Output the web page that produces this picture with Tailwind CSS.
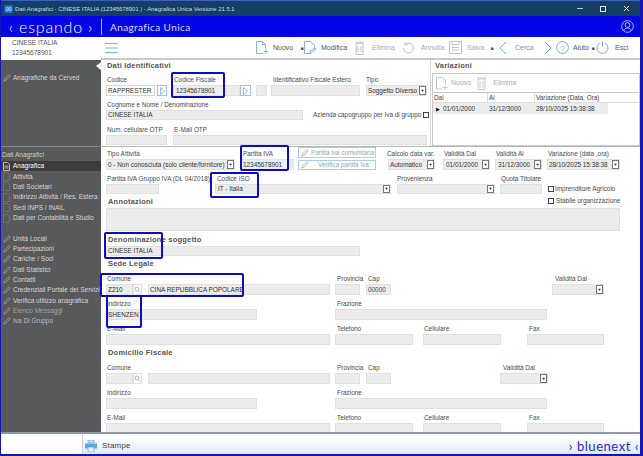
<!DOCTYPE html>
<html lang="it">
<head>
<meta charset="utf-8"/>
<title>Anagrafica Unica</title>
<script src="https://cdn.jsdelivr.net/npm/@tailwindcss/browser@4"></script>
</head>
<body class="bg-white">
<div class="relative w-[643px] h-[456px] overflow-hidden flex flex-col bg-white border-l border-r-[3px] border-b-2 border-[#1616b4] font-['Liberation_Sans',sans-serif] text-[6.4px] leading-[10px] text-[#4a4a4a]">

  <!-- Title bar -->
  <div class="h-[16px] shrink-0 bg-[#123f63] border-t border-[#3f5fc0] flex items-center text-[#cfdbe6] text-[5.9px]">
    <div class="ml-[3px] w-[9px] h-[8px] bg-[#1c6fc9] rounded-[2px] text-[5px] leading-[8px] text-center text-white">00</div>
    <span class="ml-[2px]">Dati Anagrafici - CINESE ITALIA (12345678901 ) - Anagrafica Unica Versione 21.5.1</span>
    <div class="ml-auto mr-[10px] flex items-center gap-[17px]">
      <div class="w-[6px] h-px bg-[#b8c8d6]"></div>
      <div class="w-[6px] h-[6px] border border-[#dfe8ef]"></div>
      <svg width="7" height="7" viewBox="0 0 7 7" stroke="#e8eef3" fill="none"><path d="M1 1l5 5M6 1L1 6"/></svg>
    </div>
  </div>

  <!-- Blue header -->
  <div class="h-[21px] shrink-0 bg-[#0505e6] flex items-center text-white">
    <div class="w-[100px] flex items-center justify-center font-['Lato',sans-serif] font-light text-[16px] leading-[20px] tracking-[0.8px]">‹ espando ›</div>
    <div class="w-px h-[16px] bg-[#aab0f0]"></div>
    <span class="ml-[8px] font-['Lato',sans-serif] text-[10px] tracking-[0.4px] text-[#d9dcff]">Anagrafica Unica</span>
    <svg class="ml-auto mr-[6px]" width="13" height="13" viewBox="0 0 13 13" fill="none" stroke="#c4cbff" stroke-width="0.9"><circle cx="6.5" cy="6.5" r="5.8"/><circle cx="6.5" cy="5" r="2.4"/><path d="M2.6 11c.6-2.2 2.2-3 3.9-3s3.3.8 3.9 3"/></svg>
  </div>

  <!-- Body -->
  <div class="flex h-[395px] shrink-0 overflow-hidden">

    <!-- Sidebar -->
    <aside class="w-[100px] shrink-0 flex flex-col text-[6.5px]">
      <div class="h-[23px] shrink-0 bg-white pl-[11px] pt-px text-[#555]">
        <div>CINESE ITALIA</div>
        <div>12345678901</div>
      </div>
      <div class="relative flex-1 bg-[#58595b] text-[#d6d6d6]">
        <div class="absolute right-0 top-[2px] w-0 h-0 border-y-[4px] border-y-transparent border-r-[5px] border-r-white"></div>
        <div class="h-[87px] pt-[13px] border-b border-[#8a8b8d]">
          <div class="h-[10px] flex items-center">
            <svg class="ml-[2px] w-[8px] h-[8px]" viewBox="0 0 8 8" fill="none" stroke="#a9a9a9" stroke-width="0.8"><path d="M.8 7.2l1-2.5L6 .7l1.2 1.2-4 4.2z"/></svg>
            <span class="ml-[2px]">Anagrafiche da Cerved</span>
          </div>
        </div>
        <div class="pt-[2px] text-[#d4d4a8] pl-px h-[13px] mt-px">Dati Anagrafici</div>
        <div class="flex flex-col text-[#d6d6d6]">
          <div class="h-[10.4px] flex items-center bg-[#3c3c3d] text-white"><svg class="ml-[2px] w-[7px] h-[9px]" viewBox="0 0 7 9" fill="none" stroke="#ddd" stroke-width="0.8"><path d="M.5.5h4l2 2v6h-6zM1.5 4h4M1.5 6h4"/></svg><span class="ml-[3px]">Anagrafica</span></div>
          <div class="h-[10.4px] flex items-center"><svg class="ml-[2px] w-[7px] h-[9px]" viewBox="0 0 7 9" fill="none" stroke="#777" stroke-width="0.8"><path d="M.5.5h4l2 2v6h-6z"/></svg><span class="ml-[3px]">Attività</span></div>
          <div class="h-[10.4px] flex items-center"><svg class="ml-[2px] w-[7px] h-[9px]" viewBox="0 0 7 9" fill="none" stroke="#777" stroke-width="0.8"><path d="M.5.5h4l2 2v6h-6z"/></svg><span class="ml-[3px]">Dati Societari</span></div>
          <div class="h-[10.4px] flex items-center"><svg class="ml-[2px] w-[7px] h-[9px]" viewBox="0 0 7 9" fill="none" stroke="#777" stroke-width="0.8"><path d="M.5.5h4l2 2v6h-6z"/></svg><span class="ml-[3px] whitespace-nowrap">Indirizzo Attività / Res. Estera</span></div>
          <div class="h-[10.4px] flex items-center"><svg class="ml-[2px] w-[7px] h-[9px]" viewBox="0 0 7 9" fill="none" stroke="#777" stroke-width="0.8"><path d="M.5.5h4l2 2v6h-6z"/></svg><span class="ml-[3px]">Sedi INPS / INAIL</span></div>
          <div class="h-[10.4px] flex items-center"><svg class="ml-[2px] w-[7px] h-[9px]" viewBox="0 0 7 9" fill="none" stroke="#777" stroke-width="0.8"><path d="M.5.5h4l2 2v6h-6z"/></svg><span class="ml-[3px] whitespace-nowrap">Dati per Contabilità e Studio</span></div>
        </div>
        <div class="mt-[10px] flex flex-col">
          <div class="h-[10.35px] flex items-center"><svg class="ml-[2px] w-[8px] h-[8px]" viewBox="0 0 8 8" fill="none" stroke="#a0a0a0" stroke-width="0.8"><path d="M.8 7.2l1-2.5L6 .7l1.2 1.2-4 4.2z"/></svg><span class="ml-[2px]">Unità Locali</span></div>
          <div class="h-[10.35px] flex items-center"><svg class="ml-[2px] w-[8px] h-[8px]" viewBox="0 0 8 8" fill="none" stroke="#a0a0a0" stroke-width="0.8"><path d="M.8 7.2l1-2.5L6 .7l1.2 1.2-4 4.2z"/></svg><span class="ml-[2px]">Partecipazioni</span></div>
          <div class="h-[10.35px] flex items-center"><svg class="ml-[2px] w-[8px] h-[8px]" viewBox="0 0 8 8" fill="none" stroke="#a0a0a0" stroke-width="0.8"><path d="M.8 7.2l1-2.5L6 .7l1.2 1.2-4 4.2z"/></svg><span class="ml-[2px]">Cariche / Soci</span></div>
          <div class="h-[10.35px] flex items-center"><svg class="ml-[2px] w-[8px] h-[8px]" viewBox="0 0 8 8" fill="none" stroke="#a0a0a0" stroke-width="0.8"><path d="M.8 7.2l1-2.5L6 .7l1.2 1.2-4 4.2z"/></svg><span class="ml-[2px]">Dati Statistici</span></div>
          <div class="h-[10.35px] flex items-center"><svg class="ml-[2px] w-[8px] h-[8px]" viewBox="0 0 8 8" fill="none" stroke="#a0a0a0" stroke-width="0.8"><path d="M.8 7.2l1-2.5L6 .7l1.2 1.2-4 4.2z"/></svg><span class="ml-[2px]">Contatti</span></div>
          <div class="h-[10.35px] flex items-center"><svg class="ml-[2px] w-[8px] h-[8px]" viewBox="0 0 8 8" fill="none" stroke="#a0a0a0" stroke-width="0.8"><path d="M.8 7.2l1-2.5L6 .7l1.2 1.2-4 4.2z"/></svg><span class="ml-[2px] whitespace-nowrap">Credenziali Portale dei Servizi</span></div>
          <div class="h-[10.35px] flex items-center"><svg class="ml-[2px] w-[8px] h-[8px]" viewBox="0 0 8 8" fill="none" stroke="#a0a0a0" stroke-width="0.8"><path d="M.8 7.2l1-2.5L6 .7l1.2 1.2-4 4.2z"/></svg><span class="ml-[2px] whitespace-nowrap">Verifica utilizzo anagrafica</span></div>
          <div class="h-[10.35px] flex items-center text-[#a2a2a2]"><svg class="ml-[2px] w-[8px] h-[8px]" viewBox="0 0 8 8" fill="none" stroke="#a0a0a0" stroke-width="0.8"><path d="M.8 7.2l1-2.5L6 .7l1.2 1.2-4 4.2z"/></svg><span class="ml-[2px]">Elenco Messaggi</span></div>
          <div class="h-[10.35px] flex items-center text-[#bcbcbc]"><svg class="ml-[2px] w-[8px] h-[8px]" viewBox="0 0 8 8" fill="none" stroke="#a0a0a0" stroke-width="0.8"><path d="M.8 7.2l1-2.5L6 .7l1.2 1.2-4 4.2z"/></svg><span class="ml-[2px]">Iva Di Gruppo</span></div>
        </div>
      </div>
    </aside>

    <!-- Main -->
    <main class="flex-1 min-w-0 flex flex-col">
      <!-- Toolbar -->
      <div class="h-[23px] shrink-0 border-b-2 border-[#c8c8c8] flex items-center text-[#555] bg-white text-[7px]">
        <svg class="ml-[4px]" width="13" height="10" viewBox="0 0 13 10" fill="none" stroke="#74b6dc"><path d="M0 .5h13M0 5h13M0 9.5h13"/></svg>
        <svg class="ml-[137px]" width="15" height="15" viewBox="0 0 15 15" fill="none" stroke="#6fb0da" stroke-width="0.9"><path d="M8 13.5H1.5V1.5h6l3 3v4M7.5 1.5v3h3M11 9v5M8.5 11.5h5"/></svg>
        <span class="ml-[3px] w-[27px]">Nuovo</span>
        <span class="w-[4px] text-center text-[5px]">■</span>
        <svg class="ml-[-1px]" width="15" height="15" viewBox="0 0 15 15" fill="none" stroke="#6fb0da" stroke-width="0.9"><path d="M8 13.5H1.5V1.5h6l4 4v3M7 11l5-3 1 1-5 4z"/></svg>
        <span class="ml-[3px] w-[34px]">Modifica</span>
        <svg width="9" height="14" viewBox="0 0 9 14" fill="none" stroke="#bbb" stroke-width="0.9"><path d="M1 2.5h7v11H1zM0 1h9M3 5v6M6 5v6"/></svg>
        <span class="ml-[8px] w-[30px] text-[#aaa]">Elimina</span>
        <svg width="12" height="13" viewBox="0 0 12 13" fill="none" stroke="#bbb" stroke-width="0.9"><path d="M3 3.5a5 5 0 1 1-1.500 3.500M3 1v3h3"/></svg>
        <span class="ml-[7px] w-[28px] text-[#aaa]">Annulla</span>
        <svg width="13" height="13" viewBox="0 0 13 13" fill="none" stroke="#bbb" stroke-width="0.9"><path d="M.5.5h12v12H.5zM3 .5v3h7v-3M3 6.500h7M3 9h7"/></svg>
        <span class="ml-[5px] w-[23px] text-[#aaa]">Salva</span>
        <span class="w-[4px] text-center text-[5px]">■</span>
        <svg class="ml-[5px]" width="8" height="14" viewBox="0 0 8 14" fill="none" stroke="#6fb0da"><path d="M7 1L1 7l6 6"/></svg>
        <span class="ml-[8px] w-[29px] text-[#6f93a8]">Cerca</span>
        <svg width="8" height="14" viewBox="0 0 8 14" fill="none" stroke="#6fb0da"><path d="M1 1l6 6-6 6"/></svg>
        <svg class="ml-[4px]" width="13" height="13" viewBox="0 0 13 13" fill="none" stroke="#6fb0da"><circle cx="6.500" cy="6.500" r="5.900"/><text x="6.500" y="9.500" text-anchor="middle" font-size="8" fill="#6fb0da" stroke="none" font-family="Liberation Sans">?</text></svg>
        <span class="ml-[4px] w-[18px]">Aiuto</span>
        <span class="w-[4px] text-center text-[5px]">■</span>
        <svg class="ml-[1px]" width="13" height="13" viewBox="0 0 13 13" fill="none" stroke="#6fb0da"><path d="M4 2a5.500 5.500 0 1 0 5 0M6.500 .5v5"/></svg>
        <span class="ml-[6px]">Esci</span>
      </div>

      <!-- Upper panels -->
      <div class="h-[87px] shrink-0 flex border-b border-[#b5b5b5]">
        <section class="w-[330px] shrink-0 pl-[5px] border-r border-[#d8d8d8]">
          <div class="h-[12px] pl-px font-bold text-[7.5px] leading-[12px] tracking-[0.2px] text-[#555]">Dati Identificativi</div>
          <div class="h-[11px] mt-[2px] flex items-center pl-px">
            <span class="w-[67px]">Codice</span><span class="w-[99px]">Codice Fiscale</span><span class="w-[93px]">Identificativo Fiscale Estero</span><span>Tipo</span>
          </div>
          <div class="h-[11px] flex">
            <div class="w-[49px] bg-white border border-[#d5d5d5] pl-px text-[#333] whitespace-nowrap overflow-hidden leading-[9px]">RAPPRESTER</div>
            <div class="ml-[2px] w-[10px] border border-[#9cc7e4] flex items-center justify-center"><svg width="5" height="8" viewBox="0 0 5 8" fill="none" stroke="#6fb0da" stroke-width="0.8"><path d="M.5.5L4.500 4 .5 7.500z"/></svg></div>
            <div class="ml-[6px] w-[67px] bg-[#ececec] border border-[#e0e0e0] pl-[2px] text-[#333] leading-[9px]">12345678901</div>
            <div class="w-[11px] border border-[#9cc7e4] flex items-center justify-center"><svg width="5" height="8" viewBox="0 0 5 8" fill="none" stroke="#6fb0da" stroke-width="0.8"><path d="M.5.5L4.500 4 .5 7.500z"/></svg></div>
            <div class="ml-[5px] w-[11px] bg-[#ececec] border border-[#e0e0e0]"></div>
            <div class="ml-[4px] w-[89px] bg-[#ececec] border border-[#e0e0e0]"></div>
            <div class="ml-[6px] w-[61px] bg-[#ececec] border border-[#e0e0e0] flex items-center pl-px text-[#333] whitespace-nowrap overflow-hidden"><span class="flex-1">Soggetto Diverso</span><span class="w-[7px] h-full bg-white border border-[#777] text-[#111] text-[4px] leading-[7px] text-center">▼</span></div>
          </div>
          <div class="h-[14px] flex items-end pl-px">Cognome e Nome / Denominazione</div>
          <div class="h-[10px] flex items-stretch">
            <div class="w-[197px] bg-[#ececec] border border-[#e0e0e0] pl-px text-[#333] leading-[8px]">CINESE ITALIA</div>
            <div class="ml-[10px] flex items-center whitespace-nowrap"><span>Azienda capogruppo per Iva di gruppo</span><span class="ml-[2px] w-[6px] h-[6px] border border-[#444] bg-white"></span></div>
          </div>
          <div class="h-[15px] flex items-end pl-px"><span class="w-[67px]">Num. cellulare OTP</span><span>E-Mail OTP</span></div>
          <div class="h-[10px] flex">
            <div class="w-[61px] bg-[#ececec] border border-[#e0e0e0]"></div>
            <div class="ml-[6px] w-[254px] bg-[#ececec] border border-[#e0e0e0]"></div>
          </div>
        </section>
        <section class="flex-1 min-w-0 pl-px flex flex-col">
          <div class="h-[12px] pl-[3px] font-bold text-[7.5px] leading-[12px] tracking-[0.2px] text-[#555]">Variazioni</div>
          <div class="flex-1 mt-px border border-[#c8c8c8] flex flex-col">
            <div class="h-[19px] shrink-0 flex items-center border-b border-[#c8c8c8] text-[#aaa] text-[7px]">
              <svg class="ml-[3px]" width="12" height="13" viewBox="0 0 12 13" fill="none" stroke="#bbb" stroke-width="0.8"><path d="M6 12H.5V.5h6l3 3v4M9 8v5M6.500 10.500h5"/></svg>
              <span class="ml-[3px]">Nuovo</span>
              <svg class="ml-[6px]" width="9" height="13" viewBox="0 0 9 13" fill="none" stroke="#bbb" stroke-width="0.8"><path d="M1 2h7v10.500H1zM0 1h9M3 4v7M6 4v7"/></svg>
              <span class="ml-[7px]">Elimina</span>
            </div>
            <div class="h-[10px] shrink-0 flex border-b border-[#ddd] text-[#444] leading-[9px]">
              <span class="w-[55px] border-r border-[#ddd] pl-px">Dal</span><span class="w-[47px] border-r border-[#ddd] pl-px">Al</span><span class="w-[73px] pl-px whitespace-nowrap">Variazione (Data, Ora)</span>
            </div>
            <div class="h-[11px] shrink-0 flex items-center text-[#333]">
              <div class="w-[175px] h-full bg-[#ececec] flex items-center">
                <span class="w-[9px] text-center text-[5px] text-black">▶</span>
                <span class="w-[46px] pl-[1px]">01/01/2000</span><span class="w-[47px] pl-[1px]">31/12/3000</span><span class="pl-[1px] whitespace-nowrap">28/10/2025 15:38:38</span>
              </div>
            </div>
          </div>
        </section>
      </div>

      <!-- Lower form -->
      <section class="flex-1 min-h-0 pl-[5px] overflow-hidden">
        <div class="h-[12px] pt-[2px] flex items-center pl-px whitespace-nowrap">
          <span class="w-[132px]">Tipo Attività</span><span class="w-[148px] pl-[4px]">Partita IVA</span><span class="w-[57px]">Calcolo data var.</span><span class="w-[52px]">Validità Dal</span><span class="w-[52px]">Validità Al</span><span>Variazione (data ,ora)</span>
        </div>
        <div class="h-[11px] flex relative">
          <div class="w-[129px] bg-[#ececec] border border-[#e0e0e0] flex items-center pl-px whitespace-nowrap text-[#333] overflow-hidden"><span class="flex-1 overflow-hidden">0 - Non conosciuta (solo cliente/fornitore)</span><span class="w-[7px] h-full bg-white border border-[#777] text-[#111] text-[4px] leading-[7px] text-center shrink-0">▼</span></div>
          <div class="ml-[5px] w-[54px] bg-[#e6eef8] border border-[#e0e6f0] pl-[2px] text-[#333] leading-[9px]">12345678901</div>
          <div class="ml-[4px] w-[78px] mt-px border border-[#a9d0e8] flex items-center whitespace-nowrap text-[#8aa9ba]"><svg class="ml-[2px] w-[8px] h-[8px]" viewBox="0 0 8 8" fill="none" stroke="#a5a5a5" stroke-width="0.8"><path d="M.8 7.200l1-2.500L6 .7l1.200 1.200-4 4.200z"/></svg><span class="ml-[9px]">Verifica partita Iva</span></div>
          <div class="ml-[12px] w-[47px] bg-[#ececec] border border-[#e0e0e0] flex items-center pl-px text-[#333] overflow-hidden"><span class="flex-1">Automatico</span><span class="w-[7px] h-full bg-white border border-[#777] text-[#111] text-[4px] leading-[7px] text-center">▼</span></div>
          <div class="ml-[8px] w-[47px] bg-[#ececec] border border-[#e0e0e0] flex items-center pl-[2px] text-[#333] overflow-hidden"><span class="flex-1">01/01/2000</span><span class="w-[7px] h-full bg-white border border-[#777] text-[#111] text-[4px] leading-[7px] text-center">▼</span></div>
          <div class="ml-[5px] w-[47px] bg-[#ececec] border border-[#e0e0e0] flex items-center pl-[2px] text-[#333] overflow-hidden"><span class="flex-1">31/12/3000</span><span class="w-[7px] h-full bg-white border border-[#777] text-[#111] text-[4px] leading-[7px] text-center">▼</span></div>
          <div class="ml-[5px] w-[73px] bg-[#ececec] border border-[#e0e0e0] flex items-center pl-px text-[#333] whitespace-nowrap overflow-hidden"><span class="flex-1">28/10/2025 15:38:38</span><span class="w-[7px] h-full bg-white border border-[#777] text-[#111] text-[4px] leading-[7px] text-center shrink-0">▼</span></div>
          <div class="absolute left-[192px] top-[-12px] w-[78px] h-[11px] border border-[#a9d0e8] flex items-center whitespace-nowrap text-[#8aa9ba]"><svg class="ml-[2px] w-[8px] h-[8px]" viewBox="0 0 8 8" fill="none" stroke="#a5a5a5" stroke-width="0.8"><path d="M.8 7.200l1-2.500L6 .7l1.200 1.200-4 4.200z"/></svg><span class="ml-[2px]">Partita iva comunitaria</span></div>
        </div>
        <div class="h-[14px] flex items-end pl-px whitespace-nowrap">
          <span class="w-[110px]">Partita IVA Gruppo IVA (DL 04/2018)</span><span class="w-[180px]">Codice ISO</span><span class="w-[104px]">Provenienza</span><span>Quota Titolare</span>
        </div>
        <div class="h-[10px] flex">
          <div class="w-[53px] bg-[#ececec] border border-[#e0e0e0]"></div>
          <div class="ml-[56px] w-[176px] bg-[#ececec] border border-[#e0e0e0] flex items-center pl-[2px] text-[#333]"><span class="flex-1">IT - Italia</span><span class="w-[7px] h-full bg-white border border-[#777] text-[#111] text-[4px] leading-[6px] text-center">▼</span></div>
          <div class="ml-[6px] w-[98px] bg-[#ececec] border border-[#e0e0e0] flex items-center"><span class="flex-1"></span><span class="w-[7px] h-full bg-white border border-[#777] text-[#111] text-[4px] leading-[6px] text-center">▼</span></div>
          <div class="ml-[5px] w-[42px] bg-[#ececec] border border-[#e0e0e0]"></div>
          <div class="ml-[6px] flex items-center whitespace-nowrap"><span class="w-[6px] h-[6px] border border-[#444] bg-white"></span><span class="ml-[1px]">Imprenditore Agricolo</span></div>
        </div>
        <div class="h-[14px] flex items-end pl-[2px] relative">
          <span class="font-bold text-[7.5px] leading-[12px] tracking-[0.2px] text-[#555]">Annotazioni</span>
          <div class="absolute left-[442px] top-[2px] flex items-center whitespace-nowrap"><span class="w-[6px] h-[6px] border border-[#444] bg-white"></span><span class="ml-[2px]">Stabile organizzazione</span></div>
        </div>
        <div class="w-[514px] h-[23px] bg-[#ececec] border border-[#e0e0e0]"></div>
        <div class="h-[15px] flex items-end pl-[2px]"><span class="font-bold text-[7.5px] leading-[12px] tracking-[0.2px] text-[#555]">Denominazione soggetto</span></div>
        <div class="w-[254px] h-[10px] bg-[#ececec] border border-[#e0e0e0] pl-px text-[#333] leading-[8px]">CINESE ITALIA</div>
        <div class="h-[14px] flex items-end pl-[2px]"><span class="font-bold text-[7.5px] leading-[12px] tracking-[0.2px] text-[#555]">Sede Legale</span></div>
        <div class="h-[14px] flex items-end pl-px whitespace-nowrap">
          <span class="w-[230px]">Comune</span><span class="w-[31px]">Provincia</span><span class="w-[187px]">Cap</span><span>Validità Dal</span>
        </div>
        <div class="h-[11px] flex">
          <div class="w-[27px] bg-[#ececec] border border-[#e0e0e0] pl-px text-[#222] leading-[9px]">Z210</div>
          <div class="w-[9px] border border-[#e0e0e0] flex items-center justify-center"><svg width="7" height="7" viewBox="0 0 7 7" fill="none" stroke="#8aa" stroke-width="0.8"><circle cx="3" cy="3" r="2"/><path d="M4.500 4.500L6.500 6.500"/></svg></div>
          <div class="ml-[6px] w-[182px] bg-[#ececec] border border-[#e0e0e0] pl-px text-[#333] whitespace-nowrap overflow-hidden leading-[9px]">CINA REPUBBLICA POPOLARE</div>
          <div class="ml-[5px] w-[25px] bg-[#ececec] border border-[#e0e0e0]"></div>
          <div class="ml-[6px] w-[25px] bg-[#ececec] border border-[#e0e0e0] pl-px text-[#444] leading-[9px]">00000</div>
          <div class="ml-[161px] w-[52px] bg-[#ececec] border border-[#e0e0e0] flex"><span class="flex-1"></span><span class="w-[7px] h-full bg-white border border-[#777] text-[#111] text-[4px] leading-[7px] text-center">▼</span></div>
        </div>
        <div class="h-[14px] flex items-end pl-px"><span class="w-[230px]">Indirizzo</span><span>Frazione</span></div>
        <div class="h-[11px] flex">
          <div class="w-[151px] bg-[#ececec] border border-[#e0e0e0] pl-px text-[#333] leading-[9px]">SHENZEN</div>
          <div class="ml-[78px] w-[212px] bg-[#ececec] border border-[#e0e0e0]"></div>
        </div>
        <div class="h-[14px] flex items-end pl-px"><span class="w-[230px]">E-Mail</span><span class="w-[87px]">Telefono</span><span class="w-[105px]">Cellulare</span><span>Fax</span></div>
        <div class="h-[11px] flex">
          <div class="w-[224px] bg-[#ececec] border border-[#e0e0e0]"></div>
          <div class="ml-[5px] w-[78px] bg-[#ececec] border border-[#e0e0e0]"></div>
          <div class="ml-[10px] w-[78px] bg-[#ececec] border border-[#e0e0e0]"></div>
          <div class="ml-[26px] w-[77px] bg-[#ececec] border border-[#e0e0e0]"></div>
        </div>
        <div class="h-[14px] flex items-end pl-[2px]"><span class="font-bold text-[7.5px] leading-[12px] tracking-[0.2px] text-[#555]">Domicilio Fiscale</span></div>
        <div class="h-[14px] flex items-end pl-px whitespace-nowrap">
          <span class="w-[230px]">Comune</span><span class="w-[31px]">Provincia</span><span class="w-[135px]">Cap</span><span>Validità Dal</span>
        </div>
        <div class="h-[11px] flex">
          <div class="w-[27px] bg-[#ececec] border border-[#e0e0e0]"></div>
          <div class="w-[9px] border border-[#e0e0e0] flex items-center justify-center"><svg width="7" height="7" viewBox="0 0 7 7" fill="none" stroke="#8aa" stroke-width="0.8"><circle cx="3" cy="3" r="2"/><path d="M4.500 4.500L6.500 6.500"/></svg></div>
          <div class="ml-[6px] w-[182px] bg-[#ececec] border border-[#e0e0e0]"></div>
          <div class="ml-[5px] w-[25px] bg-[#ececec] border border-[#e0e0e0]"></div>
          <div class="ml-[6px] w-[25px] bg-[#ececec] border border-[#e0e0e0]"></div>
          <div class="ml-[109px] w-[48px] bg-[#ececec] border border-[#e0e0e0] flex"><span class="flex-1"></span><span class="w-[7px] h-full bg-white border border-[#777] text-[#111] text-[4px] leading-[7px] text-center">▼</span></div>
        </div>
        <div class="h-[14px] flex items-end pl-px"><span class="w-[230px]">Indirizzo</span><span>Frazione</span></div>
        <div class="h-[11px] flex">
          <div class="w-[151px] bg-[#ececec] border border-[#e0e0e0]"></div>
          <div class="ml-[78px] w-[212px] bg-[#ececec] border border-[#e0e0e0]"></div>
        </div>
        <div class="h-[14px] flex items-end pl-px"><span class="w-[230px]">E-Mail</span><span class="w-[87px]">Telefono</span><span class="w-[105px]">Cellulare</span><span>Fax</span></div>
        <div class="h-[11px] flex">
          <div class="w-[224px] bg-[#ececec] border border-[#e0e0e0]"></div>
          <div class="ml-[5px] w-[78px] bg-[#ececec] border border-[#e0e0e0]"></div>
          <div class="ml-[10px] w-[78px] bg-[#ececec] border border-[#e0e0e0]"></div>
          <div class="ml-[26px] w-[77px] bg-[#ececec] border border-[#e0e0e0]"></div>
        </div>
      </section>
    </main>
  </div>

  <!-- Footer -->
  <div class="flex-1 border-t-2 border-[#8c9ca6] flex bg-white">
    <div class="w-[82px] border-r border-[#cfcfcf]"></div>
    <div class="flex-1 mt-[3px] bg-gradient-to-b from-white to-[#dceafa] flex items-center">
      <svg class="ml-[2px]" width="12" height="12" viewBox="0 0 12 12"><path d="M3 0h6v3H3z" fill="#bfe0f5" stroke="#4f9fd0" stroke-width="0.6"/><path d="M0 3.500h12v5H0z" fill="#5aa9da"/><path d="M3 7h6v5H3z" fill="#e6f3fb" stroke="#4f9fd0" stroke-width="0.6"/></svg>
      <span class="ml-[5px] text-[8px] tracking-[0.2px] text-[#444]">Stampe</span>
      <span class="ml-auto mr-[1px] font-['Lato',sans-serif] text-[13px] leading-[14px] tracking-[0.55px] text-[#2a2ac0]">› bluenext ‹</span>
    </div>
  </div>

  <!-- Highlight frames drawn over the form -->
  <div class="absolute left-[170px] top-[72px] w-[54px] h-[26px] border-2 border-[#0c0cc4] rounded-[2px]"></div>
  <div class="absolute left-[239px] top-[145px] w-[49px] h-[26px] border-2 border-[#0c0cc4] rounded-[2px]"></div>
  <div class="absolute left-[209px] top-[172px] w-[49px] h-[26px] border-2 border-[#0c0cc4] rounded-[2px]"></div>
  <div class="absolute left-[103px] top-[232px] w-[59px] h-[27px] border-2 border-[#0c0cc4] rounded-[2px]"></div>
  <div class="absolute left-[99px] top-[273px] w-[144px] h-[24px] border-2 border-[#0c0cc4] rounded-[2px]"></div>
  <div class="absolute left-[105px] top-[295px] w-[36px] h-[33px] border-2 border-[#0c0cc4] rounded-[2px]"></div>
</div>
</body>
</html>
